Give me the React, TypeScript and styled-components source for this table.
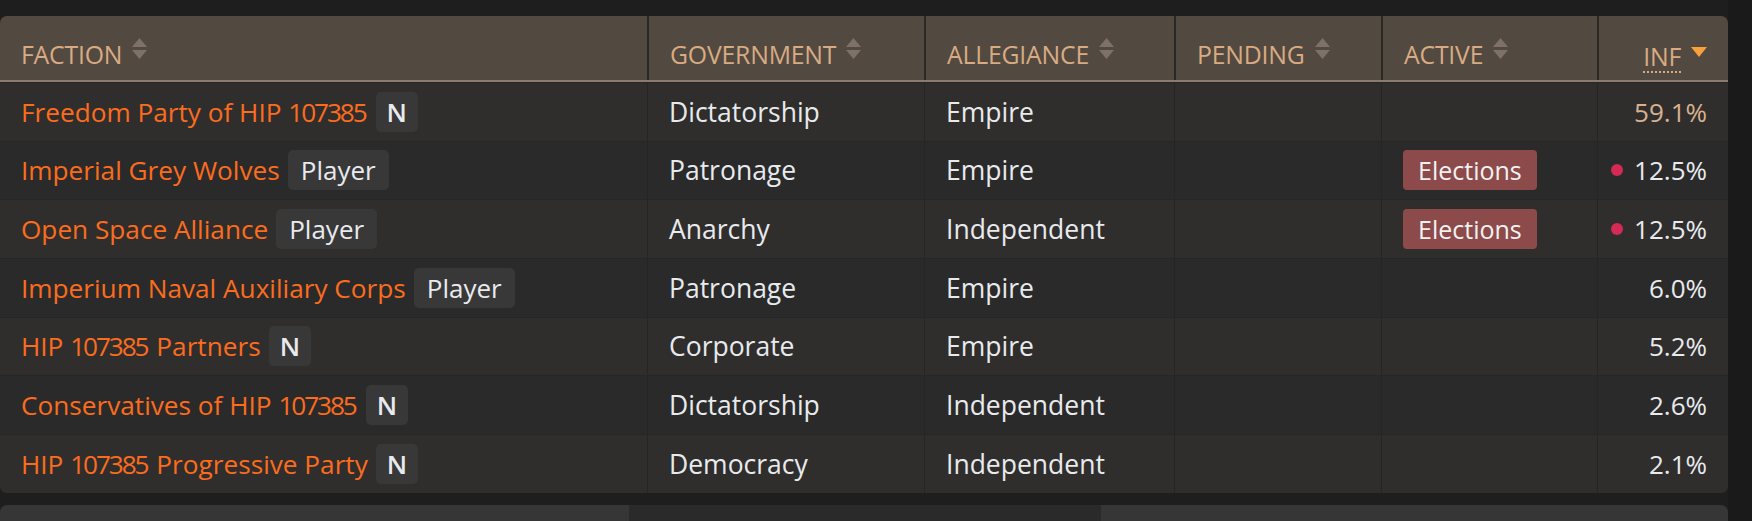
import React from "react";
import styled, { createGlobalStyle } from "styled-components";

const GlobalStyle = createGlobalStyle`
  html, body {
    margin: 0;
    padding: 0;
    background: #1e1e1e;
  }
  body {
    font-family: "Open Sans", "Noto Sans", "Liberation Sans", sans-serif;
    -webkit-font-smoothing: antialiased;
  }
`;

const COLS = "647px 277px 250px 207px 216px 131px";

const Page = styled.div`
  display: flex;
  width: 1752px;
  height: 521px;
  overflow: hidden;
`;

const Main = styled.div`
  width: 1728px;
  display: flex;
  flex-direction: column;
  padding-top: 16px;
  gap: 12px;
`;

const SideStrip = styled.div`
  width: 24px;
  background: #1a1a1a;
`;

const Table = styled.div`
  border-radius: 7px;
  overflow: hidden;
  background: #2a2a2a;
`;

const HeadRow = styled.div`
  display: grid;
  grid-template-columns: ${COLS};
  height: 64px;
  background: #524941;
  border-bottom: 2px solid #8a7c6f;
`;

const HeadCell = styled.div<{ $right?: boolean; $first?: boolean }>`
  display: flex;
  align-items: flex-end;
  justify-content: ${(p) => (p.$right ? "flex-end" : "flex-start")};
  gap: 10px;
  padding: 0 21px 10px;
  border-left: ${(p) => (p.$first ? "none" : "2px solid #2c2825")};
  color: #d9ab82;
  font-size: 24.8px;
  line-height: 32px;
  letter-spacing: -0.2px;
`;

const HeadLabel = styled.span<{ $dotted?: boolean }>`
  ${(p) =>
    p.$dotted
      ? `border-bottom: 2px dotted #d9ab82; line-height: 30px; margin-bottom: -3px;`
      : ""}
`;

const SortIcon = styled.svg`
  width: 15px;
  height: 21px;
  margin-bottom: 11px;
  flex: none;
`;

const DescIcon = styled.svg`
  width: 16px;
  height: 10px;
  margin-bottom: 13px;
  flex: none;
`;

const Row = styled.div<{ $odd: boolean }>`
  display: grid;
  grid-template-columns: ${COLS};
  height: 58.66px;
  box-sizing: border-box;
  background: ${(p) => (p.$odd ? "#2f2e2c" : "#2a2a2a")};
  border-top: 1px solid #262626;
  &:first-of-type {
    border-top: none;
  }
`;

const Cell = styled.div<{ $right?: boolean; $first?: boolean }>`
  display: flex;
  align-items: center;
  justify-content: ${(p) => (p.$right ? "flex-end" : "flex-start")};
  padding: 0 21px;
  border-left: ${(p) => (p.$first ? "none" : "1px solid #252525")};
  color: #e8eaee;
  font-size: 26.5px;
  white-space: nowrap;
`;

const FactionLink = styled.a`
  color: #fb6c1e;
  text-decoration: none;
  font-size: 26.2px;
`;

const Digits = styled.span`
  letter-spacing: -2.1px;
  margin-right: 2.1px;
`;

const Tag = styled.span<{ $strong?: boolean }>`
  display: inline-flex;
  align-items: center;
  height: 40px;
  padding: 0 ${(p) => (p.$strong ? "11px" : "13px")};
  margin-left: 8px;
  border-radius: 5px;
  background: #383838;
  color: #e8eaee;
  font-size: 26px;
  font-weight: ${(p) => (p.$strong ? 600 : 400)};
`;

const StateBadge = styled.span`
  display: inline-flex;
  align-items: center;
  height: 40px;
  padding: 0 15px;
  border-radius: 4px;
  background: #8d4a4a;
  color: #f2f2f2;
  font-size: 25px;
`;

const Influence = styled.span<{ $top?: boolean }>`
  color: ${(p) => (p.$top ? "#d9b18e" : "#e8eaee")};
  font-size: 26px;
`;

const Dot = styled.span`
  width: 12px;
  height: 12px;
  border-radius: 50%;
  background: #d42a55;
  margin-right: 11px;
  flex: none;
`;

const Footer = styled.div`
  display: grid;
  grid-template-columns: 629px 472px 1fr;
  height: 16px;
`;

const FooterBlock = styled.div<{ $shade: "light" | "dark"; $round?: "left" | "right" }>`
  background: ${(p) => (p.$shade === "light" ? "#363636" : "#2a2a2a")};
  border-top-left-radius: ${(p) => (p.$round === "left" ? "7px" : "0")};
  border-top-right-radius: ${(p) => (p.$round === "right" ? "7px" : "0")};
`;

type Col = { label: string; right?: boolean; sort: "none" | "desc"; dotted?: boolean };

const columns: Col[] = [
  { label: "FACTION", sort: "none" },
  { label: "GOVERNMENT", sort: "none" },
  { label: "ALLEGIANCE", sort: "none" },
  { label: "PENDING", sort: "none" },
  { label: "ACTIVE", sort: "none" },
  { label: "INF", sort: "desc", right: true, dotted: true },
];

type Faction = {
  name: string;
  tag: "N" | "Player";
  gov: string;
  allegiance: string;
  active?: string;
  inf: string;
  top?: boolean;
  dot?: boolean;
};

const factions: Faction[] = [
  { name: "Freedom Party of HIP 107385", tag: "N", gov: "Dictatorship", allegiance: "Empire", inf: "59.1%", top: true },
  { name: "Imperial Grey Wolves", tag: "Player", gov: "Patronage", allegiance: "Empire", active: "Elections", inf: "12.5%", dot: true },
  { name: "Open Space Alliance", tag: "Player", gov: "Anarchy", allegiance: "Independent", active: "Elections", inf: "12.5%", dot: true },
  { name: "Imperium Naval Auxiliary Corps", tag: "Player", gov: "Patronage", allegiance: "Empire", inf: "6.0%" },
  { name: "HIP 107385 Partners", tag: "N", gov: "Corporate", allegiance: "Empire", inf: "5.2%" },
  { name: "Conservatives of HIP 107385", tag: "N", gov: "Dictatorship", allegiance: "Independent", inf: "2.6%" },
  { name: "HIP 107385 Progressive Party", tag: "N", gov: "Democracy", allegiance: "Independent", inf: "2.1%" },
];

const Unsorted = () => (
  <SortIcon viewBox="0 0 15 21">
    <polygon points="0,9 7.5,0 15,9" fill="#7e7168" />
    <polygon points="0,12 15,12 7.5,21" fill="#7e7168" />
  </SortIcon>
);

const Desc = () => (
  <DescIcon viewBox="0 0 16 10">
    <polygon points="0,0 16,0 8,10" fill="#f7a03c" />
  </DescIcon>
);

const renderName = (name: string) =>
  name.split(/(\d+)/).map((part, i) =>
    /^\d+$/.test(part) ? <Digits key={i}>{part}</Digits> : <React.Fragment key={i}>{part}</React.Fragment>
  );

export default function App() {
  return (
    <>
      <GlobalStyle />
      <Page>
        <Main>
          <Table>
            <HeadRow>
              {columns.map((c, i) => (
                <HeadCell key={c.label} $right={c.right} $first={i === 0}>
                  <HeadLabel $dotted={c.dotted}>{c.label}</HeadLabel>
                  {c.sort === "desc" ? <Desc /> : <Unsorted />}
                </HeadCell>
              ))}
            </HeadRow>
            {factions.map((f, i) => (
              <Row key={f.name} $odd={i % 2 === 0}>
                <Cell $first>
                  <FactionLink href="#">{renderName(f.name)}</FactionLink>
                  <Tag $strong={f.tag === "N"}>{f.tag}</Tag>
                </Cell>
                <Cell>{f.gov}</Cell>
                <Cell>{f.allegiance}</Cell>
                <Cell />
                <Cell>{f.active && <StateBadge>{f.active}</StateBadge>}</Cell>
                <Cell $right>
                  {f.dot && <Dot />}
                  <Influence $top={f.top}>{f.inf}</Influence>
                </Cell>
              </Row>
            ))}
          </Table>
          <Footer>
            <FooterBlock $shade="light" $round="left" />
            <FooterBlock $shade="dark" />
            <FooterBlock $shade="light" $round="right" />
          </Footer>
        </Main>
        <SideStrip />
      </Page>
    </>
  );
}
